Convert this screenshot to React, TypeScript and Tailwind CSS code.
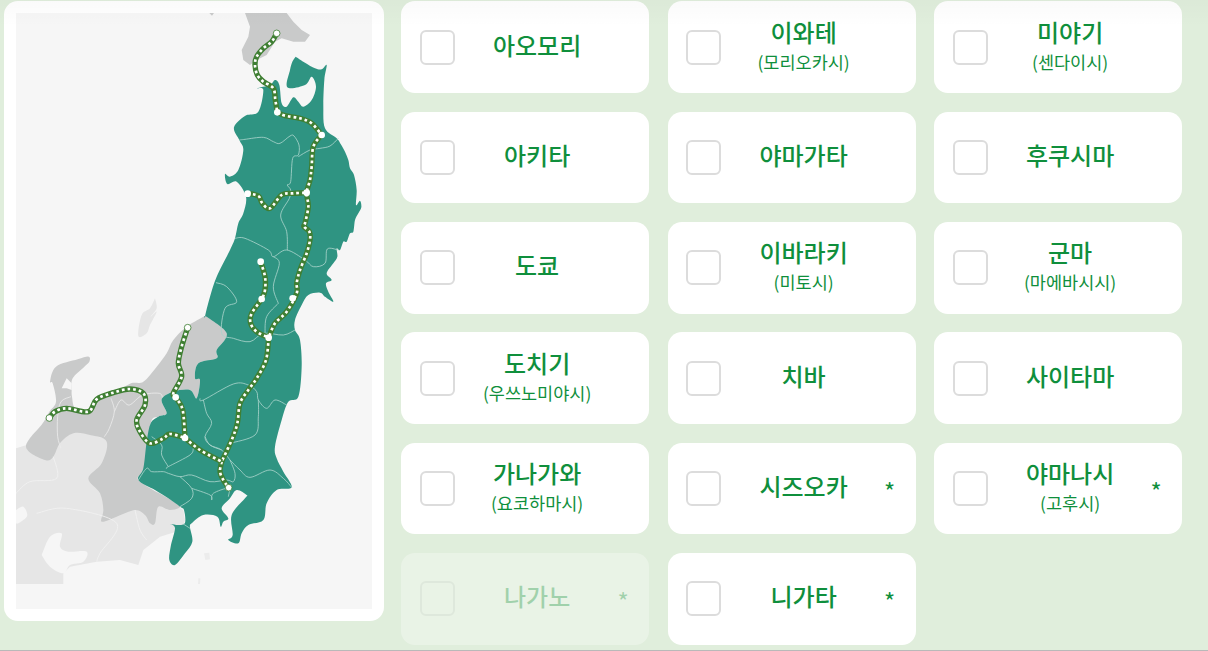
import React from "react";

type Pt = [number, number];

const prefs: { name: string; sub?: string; star?: boolean; disabled?: boolean }[] = [
  { name: "아오모리" },
  { name: "이와테", sub: "(모리오카시)" },
  { name: "미야기", sub: "(센다이시)" },
  { name: "아키타" },
  { name: "야마가타" },
  { name: "후쿠시마" },
  { name: "도쿄" },
  { name: "이바라키", sub: "(미토시)" },
  { name: "군마", sub: "(마에바시시)" },
  { name: "도치기", sub: "(우쓰노미야시)" },
  { name: "치바" },
  { name: "사이타마" },
  { name: "가나가와", sub: "(요코하마시)" },
  { name: "시즈오카", star: true },
  { name: "야마나시", sub: "(고후시)", star: true },
  { name: "나가노", star: true, disabled: true },
  { name: "니가타", star: true },
];

// map coordinates are 3x page pixels
const poly = (pts: number[]) => {
  let d = "";
  for (let i = 0; i < pts.length; i += 2) d += `${i ? "L" : "M"}${pts[i]} ${pts[i + 1]}`;
  return d + "Z";
};

const smooth = (pts: Pt[]) => {
  let d = `M${pts[0][0]} ${pts[0][1]}`;
  for (let i = 0; i < pts.length - 1; i++) {
    const p0 = pts[Math.max(i - 1, 0)];
    const p1 = pts[i];
    const p2 = pts[i + 1];
    const p3 = pts[Math.min(i + 2, pts.length - 1)];
    d += `C${p1[0] + (p2[0] - p0[0]) / 6} ${p1[1] + (p2[1] - p0[1]) / 6} ${p2[0] - (p3[0] - p1[0]) / 6} ${p2[1] - (p3[1] - p1[1]) / 6} ${p2[0]} ${p2[1]}`;
  }
  return d;
};

// same curve as smooth, for a land outline given as a flat list
const blob = (flat: number[]) => {
  const pts: Pt[] = [];
  for (let i = 0; i < flat.length; i += 2) pts.push([flat[i], flat[i + 1]]);
  return smooth([...pts, pts[0]]) + "Z";
};

const teal = blob([
  887,170, 915,188, 945,205, 965,208, 980,195, 973,240, 970,320, 975,385, 1010,415, 1022,432, 1035,455, 1045,480, 1050,505,
  1062,525, 1070,570, 1068,615, 1080,602, 1084,622, 1075,640, 1065,660, 1060,695, 1050,700, 1040,725, 1030,725, 1020,750,
  1010,745, 1012,770, 1000,790, 980,820, 995,840, 978,850, 985,875, 1000,905, 975,890, 960,878, 925,885, 905,915, 885,960,
  885,990, 900,1020, 905,1100, 895,1190, 865,1205, 845,1260, 825,1340, 830,1375, 850,1415, 875,1462, 830,1470, 800,1510,
  790,1560, 745,1575, 725,1600, 715,1630, 685,1620, 698,1605, 695,1545, 735,1495, 740,1485, 710,1470, 690,1495, 665,1525,
  685,1555, 670,1565, 662,1580, 652,1550, 610,1545, 575,1570, 570,1582, 577,1625, 555,1660, 525,1695, 508,1680, 512,1640,
  525,1585, 512,1572, 535,1575, 555,1568, 552,1530, 540,1520, 505,1495, 465,1470, 415,1440, 430,1405, 440,1325, 452,1270,
  475,1250, 500,1240, 485,1198, 520,1175, 570,1170, 590,1195, 600,1140, 585,1135, 595,1090, 650,1075, 650,1050, 680,1000,
  620,950, 615,950, 630,890, 650,830, 690,750, 705,715, 715,670, 730,640, 738,590, 710,545, 682,552, 675,522, 690,530,
  715,510, 730,450, 718,420, 702,382, 735,348, 775,335, 790,270, 772,265, 810,255, 825,240, 838,255, 845,310, 860,320,
  880,292, 895,305, 910,320, 935,300, 948,260, 935,230, 915,255, 862,262, 870,210, 877,185,
]);

const hokkaido = poly([
  735,39, 860,39, 880,65, 905,90, 930,105, 915,125, 880,125, 845,115, 825,125, 800,165, 770,180, 750,195, 730,180,
  725,150, 745,110, 750,80,
]);

const darkGrey = blob([
  620,945, 680,1000, 650,1050, 650,1075, 595,1090, 585,1135, 600,1140, 590,1195, 570,1170, 520,1175, 485,1198,
  500,1240, 475,1250, 452,1270, 440,1405, 415,1440, 505,1495, 540,1520, 510,1530, 475,1520, 465,1570, 450,1570,
  435,1545, 405,1530, 350,1550, 305,1565, 310,1530, 300,1480, 265,1435, 305,1390, 320,1325, 270,1305, 220,1300,
  180,1330, 160,1370, 135,1380, 78,1340, 128,1270, 148,1235, 168,1205, 158,1150, 150,1145, 168,1100, 233,1078,
  266,1070, 268,1085, 253,1100, 218,1135, 215,1170, 216,1190, 225,1225, 258,1235, 278,1215, 288,1195, 348,1175,
  393,1150, 430,1145, 470,1100, 500,1060, 520,1020, 560,980,
]);

const lightGrey = poly([
  48,1345, 80,1335, 135,1370, 220,1290, 330,1320, 420,1450, 550,1530, 555,1560, 545,1590, 480,1610, 430,1650,
  415,1695, 360,1680, 290,1685, 210,1700, 190,1720, 190,1752, 48,1752,
]);

const iseBay = blob([125,1665, 150,1610, 185,1600, 180,1640, 205,1655, 260,1655, 250,1685, 210,1695, 190,1720, 150,1700]);
const leftBay = blob([48,1530, 70,1520, 82,1545, 70,1560, 48,1570]);
const notoBay = poly([185,1165, 200,1135, 215,1150, 215,1170, 200,1165]);
const sado = blob([465,895, 470,925, 452,950, 470,935, 450,975, 440,1000, 415,1008, 425,945, 450,925]);

const northBorders: Pt[][] = [
  [[28,270],[45,268],[100,262],[130,275],[150,280],[180,258],[192,258],[207,285],[205,315],[188,325],[182,395],[172,405],[182,420],[178,445],[152,495],[170,545],[172,600]],
  [[205,320],[240,300],[270,295],[300,288],[325,265]],
  [[15,565],[45,565],[115,600],[130,620],[170,600],[225,630],[250,650],[285,640],[292,597],[325,600]],
  [[130,620],[148,640],[130,710],[145,760]],
];

const midBorders: Pt[][] = [
  [[648,848],[680,860],[710,905],[675,925],[665,1000],[700,1015],[750,1025],[790,1000],[850,1005],[885,990]],
  [[835,910],[800,950],[795,1000]],
  [[600,1195],[610,1200],[700,1152],[745,1155],[770,1175],[775,1200],[800,1225],[825,1200],[860,1215]],
  [[610,1200],[620,1240],[635,1270],[615,1310],[630,1335],[665,1350]],
  [[775,1200],[775,1250],[765,1305],[690,1330]],
];

const kantoBorders: Pt[][] = [
  [[25,240],[50,205],[65,215],[100,215],[115,220],[150,230],[185,225],[240,245],[290,240],[310,245],[315,220],[300,180]],
  [[300,180],[330,210],[360,232],[420,210],[460,235],[485,262]],
  [[110,205],[115,200],[180,165],[190,145]],
  [[115,200],[95,165],[95,135],[65,110]],
  [[150,230],[185,265],[185,295],[150,320]],
  [[185,265],[240,285],[245,300],[250,280],[295,265],[295,290]],
  [[225,110],[240,135],[275,150],[300,180]],
  [[160,372],[180,385]],
];

const greyBorders: Pt[][] = [
  [[165,170],[135,185],[125,230],[125,290],[135,325]],
  [[285,175],[295,215],[280,265],[265,290]],
  [[295,215],[315,180],[340,195],[380,165],[430,160],[440,175]],
];

const lightBorders: Pt[][] = [
  [[48,1480],[90,1445],[170,1435],[160,1370]],
  [[110,1540],[200,1525],[350,1570],[300,1660],[290,1685]],
  [[405,1530],[420,1590],[440,1620]],
];

const routes: Pt[][] = [
  [[830,100],[815,125],[790,145],[770,170],[765,195],[772,225],[790,245],[820,265],[826,300],[832,337]],
  [[832,337],[855,347],[900,355],[935,370],[965,405]],
  [[965,405],[940,440],[935,500],[930,540],[920,578],[925,620],[915,670],[912,680],[928,695],[930,720],[920,760],[900,810],[890,850],[890,880],[860,935],[825,970],[806,1013]],
  [[806,1013],[798,1080],[770,1135],[745,1170],[720,1210],[712,1270],[695,1320],[665,1385]],
  [[665,1385],[660,1415],[670,1440],[685,1462]],
  [[742,580],[775,588],[787,610],[810,625],[845,585],[880,580],[920,578]],
  [[782,785],[795,830],[795,870],[785,897],[755,940],[752,970],[770,995],[806,1013]],
  [[563,983],[545,1040],[535,1090],[545,1130],[520,1180],[527,1192],[548,1230],[555,1314]],
  [[555,1314],[600,1350],[665,1385]],
  [[148,1254],[165,1235],[200,1225],[265,1235],[290,1198],[340,1178],[390,1167],[430,1180],[435,1215],[410,1260],[420,1295],[450,1330],[490,1315],[510,1302],[555,1314]],
];

const stations: Pt[] = [[832,337],[965,405],[920,578],[743,581],[782,785],[785,897],[878,895],[527,1192],[806,1013],[555,1314]];
const terminals: Pt[] = [[830,100],[148,1254],[563,983],[686,1463]];

const Lines = ({ items, color, at }: { items: Pt[][]; color: string; at?: string }) => (
  <g transform={at} fill="none" stroke={color} strokeWidth="2.5">
    {items.map((b, i) => (
      <path key={i} d={smooth(b)} />
    ))}
  </g>
);

const RailMap = () => (
  <svg viewBox="48 39 1068 1788" className="block w-full h-full">
    <rect x="48" y="39" width="1068" height="1788" fill="#f6f6f6" />
    <path d={lightGrey} fill="#e6e6e6" />
    <path d={iseBay} fill="#f6f6f6" />
    <path d={leftBay} fill="#f6f6f6" />
    <path d={sado} fill="#e6e6e6" />
    <path d={poly([612,1660, 628,1658, 630,1678, 616,1680])} fill="#ececec" />
    <path d={poly([595,1735, 601,1735, 600,1752, 594,1752])} fill="#ececec" />
    <path d={poly([628,39, 642,39, 636,47])} fill="#c9caca" />
    <path d={hokkaido} fill="#c9caca" />
    <path d={darkGrey} fill="#c9caca" />
    <path d={notoBay} fill="#f6f6f6" />
    <Lines items={greyBorders} color="#ececec" at="translate(48 1020)" />
    <Lines items={lightBorders} color="#f2f2f2" />
    <path d={teal} fill="#2f9482" />
    <Lines items={northBorders} color="#a9d4cb" at="translate(690 150)" />
    <Lines items={midBorders} color="#a9d4cb" />
    <Lines items={kantoBorders} color="#a9d4cb" at="translate(390 1200)" />
    {routes.map((r, i) => (
      <g key={i} fill="none">
        <path d={smooth(r)} stroke="#3f7f33" strokeWidth="16" strokeLinejoin="round" />
        <path d={smooth(r)} stroke="#ffffff" strokeWidth="8" strokeDasharray="8 9" />
      </g>
    ))}
    {stations.map(([x, y], i) => (
      <circle key={i} cx={x} cy={y} r="10" fill="#fff" />
    ))}
    {terminals.map(([x, y], i) => (
      <circle key={i} cx={x} cy={y} r="10" fill="#fff" stroke="#3f7f33" strokeWidth="2.5" />
    ))}
  </svg>
);

const PrefCard = ({ name, sub, star, disabled }: (typeof prefs)[number]) => (
  <div className={`flex items-center h-[91.8px] pl-[18.6px] bg-white rounded-[14px] text-[#0f8f3c] ${disabled ? "opacity-30" : ""}`}>
    <span className="w-[35px] h-[35px] shrink-0 border-2 border-[#dcdcdc] rounded-[6px] bg-white" />
    <div className="flex flex-col items-center w-[165px] pb-[5px]">
      <span className="text-[24px] leading-[32px] font-medium">{name}</span>
      {sub && <span className="text-[17.5px] leading-[25px] mt-[1px]">{sub}</span>}
    </div>
    {star && <span className="text-[24px] leading-none pt-[4px] -ml-[2px]">*</span>}
  </div>
);

export default function App() {
  return (
    <div className="relative h-[651px] overflow-hidden border-b border-[#b9b9b9] bg-[#e0eedc] font-['Noto_Sans_CJK_KR','Noto_Sans',sans-serif]">
      <div className="flex items-start pt-px pl-1">
        <div className="w-[380px] h-[620px] shrink-0 p-3 bg-white rounded-[14px]">
          <RailMap />
        </div>
        <div className="grid grid-cols-[repeat(3,248px)] gap-x-[18.5px] gap-y-[18.55px] ml-[17px] mt-[.3px]">
          {prefs.map((p) => (
            <PrefCard key={p.name} {...p} />
          ))}
        </div>
      </div>
      <div className="absolute inset-x-0 top-0 h-[27px] bg-gradient-to-b from-black/[.02] to-transparent pointer-events-none" />
    </div>
  );
}
